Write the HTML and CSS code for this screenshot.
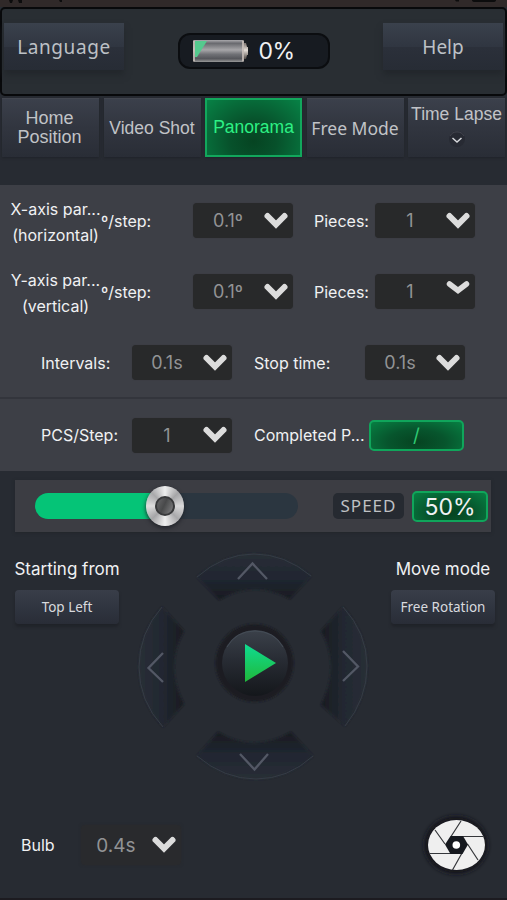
FILE: index.html
```html
<!DOCTYPE html>
<html lang="en">
<head>
<meta charset="utf-8">
<title>Panorama</title>
<link rel="stylesheet" href="styles.css">
</head>
<body>
<svg class="defs" width="0" height="0" aria-hidden="true">
  <symbol id="chev" viewBox="0 0 26 20"><path d="M4.5 5 13 13.5 21.500 5" fill="none" stroke="#dcdcdc" stroke-width="6" stroke-linecap="round"/></symbol>
</svg>
<main class="app">
  <div class="status"><svg width="507" height="8"><path d="M9 0h4l-1 3h-2zM18 0h4v3h-3zM59 0h3v2h-2zM455 0h4v1.500h-3zM472 0h24q0 2-3 2h-18q-3 0-3-2z" fill="#0c0c0d"/></svg></div>
  <header class="header">
    <button class="top-btn"><span class="t-language">Language</span></button>
    <div class="battery">
      <svg width="58" height="26" viewBox="0 0 58 26">
        <defs>
          <linearGradient id="cell" x1="0" y1="0" x2="0" y2="1"><stop offset="0" stop-color="#aaa9ad"/><stop offset=".15" stop-color="#68696e"/><stop offset=".45" stop-color="#a7a6a9"/><stop offset=".65" stop-color="#707176"/><stop offset=".85" stop-color="#55565b"/><stop offset="1" stop-color="#999"/></linearGradient>
          <linearGradient id="cap" x1="0" y1="0" x2="0" y2="1"><stop offset="0" stop-color="#78706c"/><stop offset=".45" stop-color="#e5ded8"/><stop offset="1" stop-color="#4d4744"/></linearGradient>
        </defs>
        <path d="M52 5h3l1 4h1v8h-1l-1 4h-3z" fill="url(#cap)"/>
        <rect x="2" y="2" width="51" height="22" rx="2" fill="url(#cell)"/>
        <path d="M4 3h12L6 19H4z" fill="#55c98e"/>
        <path d="M3 2.500v21M52 2.500v21" stroke="#d2c7c1" stroke-width="1.500"/>
      </svg>
      <span class="t-zero">0%</span>
    </div>
    <button class="top-btn"><span class="t-help">Help</span></button>
  </header>
  <nav class="tabs">
    <button class="tab"><span class="t-home">Home<br>Position</span></button>
    <button class="tab"><span class="t-video">Video Shot</span></button>
    <button class="tab active"><span class="t-pano">Panorama</span></button>
    <button class="tab"><span class="t-free">Free Mode</span></button>
    <button class="tab lapse"><span class="t-lapse">Time Lapse</span><svg width="18" height="18"><circle cx="9" cy="9" r="8" fill="#272a33"/><path d="M2 6a8 8 0 0 1 14 0" fill="none" stroke="#444650"/><path d="m4.500 8 4.500 4 4.500-4" fill="none" stroke="#d7d9dd" stroke-width="1.500"/></svg></button>
  </nav>
  <section class="panel">
    <div class="axis-row">
      <div class="axis"><span class="t-axis">X-axis par...</span><span class="t-dir">(horizontal)</span></div>
      <span class="label t-step">º/step:</span>
      <div class="select"><span>0.1º</span><svg class="chev"><use href="#chev"/></svg></div>
      <span class="label t-pieces">Pieces:</span>
      <div class="select"><span>1</span><svg class="chev"><use href="#chev"/></svg></div>
    </div>
    <div class="axis-row">
      <div class="axis"><span class="t-axis">Y-axis par...</span><span class="t-dir">(vertical)</span></div>
      <span class="label t-step">º/step:</span>
      <div class="select"><span>0.1º</span><svg class="chev"><use href="#chev"/></svg></div>
      <span class="label t-pieces">Pieces:</span>
      <div class="select"><span>1</span><svg class="chev raised" preserveAspectRatio="none" viewBox="0 0 26 20"><path d="M4.500 5 13 11.500 21.500 5" fill="none" stroke="#dcdcdc" stroke-width="5.500" stroke-linecap="round"/></svg></div>
    </div>
    <div class="time-row">
      <span class="label">Intervals:</span>
      <div class="select"><span>0.1s</span><svg class="chev"><use href="#chev"/></svg></div>
      <span class="label">Stop time:</span>
      <div class="select"><span>0.1s</span><svg class="chev"><use href="#chev"/></svg></div>
    </div>
    <div class="pcs-row">
      <span class="label">PCS/Step:</span>
      <div class="select"><span>1</span><svg class="chev"><use href="#chev"/></svg></div>
      <span class="label t-completed">Completed P...</span>
      <div class="green progress">/</div>
    </div>
  </section>
  <section class="speed">
    <div class="track"><div class="fill"></div><div class="knob"><div class="hub"></div></div></div>
    <span class="speed-label">SPEED</span>
    <span class="green percent">50%</span>
  </section>
  <section class="controls">
    <div class="side">
      <span class="t-start">Starting from</span>
      <button class="small-btn"><span class="t-topleft">Top Left</span></button>
    </div>
    <svg class="pad" width="250" height="240" viewBox="0 0 250 240">
      <defs>
        <linearGradient id="gt" x1="0" y1="0" x2="0" y2="1"><stop offset="0" stop-color="#292e37"/><stop offset=".55" stop-color="#202630"/><stop offset="1" stop-color="#181b21"/></linearGradient>
        <linearGradient id="gb" x1="0" y1="1" x2="0" y2="0"><stop offset="0" stop-color="#292e37"/><stop offset=".55" stop-color="#202630"/><stop offset="1" stop-color="#181b21"/></linearGradient>
        <linearGradient id="gl"><stop offset="0" stop-color="#292e37"/><stop offset=".5" stop-color="#222831"/><stop offset="1" stop-color="#181b21"/></linearGradient>
        <linearGradient id="gr" x1="1" x2="0"><stop offset="0" stop-color="#292e37"/><stop offset=".5" stop-color="#222831"/><stop offset="1" stop-color="#181b21"/></linearGradient>
        <linearGradient id="ball" x1="0" y1="0" x2="0" y2="1"><stop offset="0" stop-color="#3b414a"/><stop offset=".45" stop-color="#282c34"/><stop offset="1" stop-color="#14171b"/></linearGradient>
        <linearGradient id="play" x1="0" y1="0" x2="0" y2="1"><stop offset="0" stop-color="#0fdc91"/><stop offset="1" stop-color="#20b83a"/></linearGradient>
        <filter id="soft" x="-20%" y="-20%" width="140%" height="140%"><feGaussianBlur stdDeviation="1.200"/></filter>
      </defs>
      <g filter="url(#soft)">
        <path d="M67 32Q93 9 124 9T181 31L160 54Q124 34 89 55Z" fill="url(#gt)"/>
        <path d="M67 211Q94 234 126 234T183 211L161 187Q124 209 88 187Z" fill="url(#gb)"/>
        <path d="M32 62Q9 88 9 122T33 182L54 159Q34 121 54 86Z" fill="url(#gl)"/>
        <path d="M213 62Q237 88 237 121T215 181L191 160Q211 120 191 86Z" fill="url(#gr)"/>
      </g>
      <g fill="none" stroke="#38404a" stroke-width=".8">
        <path d="M67 32Q93 9 124 9T181 31M67 211Q94 234 126 234T183 211M32 62Q9 88 9 122T33 182M213 62Q237 88 237 121T215 181"/>
      </g>
      <g fill="none" stroke="#535865" stroke-width="2.300">
        <path d="m108 34 14.500-15.500L137 34M110 209l14.500 15.500L138 209M33 108 18.500 123 33 137M213 106l15 15.500L213 136"/>
      </g>
      <circle cx="124.500" cy="118" r="39" fill="#1b1e23" filter="url(#soft)"/>
      <circle cx="125" cy="118" r="33" fill="url(#ball)"/>
      <path d="M97 102Q106 86 125 86T153 102" fill="none" stroke="#48515a" stroke-width=".8"/>
      <path d="M115 99v38l31-19z" fill="url(#play)"/>
    </svg>
    <div class="side">
      <span class="t-move">Move mode</span>
      <button class="small-btn"><span class="t-rotation">Free Rotation</span></button>
    </div>
  </section>
  <footer class="footer">
    <span class="label t-bulb">Bulb</span>
    <div class="select bulb"><span>0.4s</span><svg class="chev"><use href="#chev"/></svg></div>
    <svg class="shutter" width="76" height="70" viewBox="0 0 76 70">
      <defs><filter id="halo" x="-20%" y="-20%" width="140%" height="140%"><feGaussianBlur stdDeviation="2"/></filter></defs>
      <ellipse cx="38" cy="35" rx="32" ry="29" fill="#15181c" filter="url(#halo)"/>
      <ellipse cx="38.500" cy="35" rx="28.500" ry="25" fill="#efefef"/>
      <path d="m33 26.500 10-15.500M44.500 26.500H65M49.500 34 60 50M44 43 34.500 60M33 43.500H12M27 34 17 20" stroke="#35373b" stroke-width="1.200"/>
      <path d="M32.500 26h12.500l5 8.500L44.500 44H32.500l-5.500-9.500z" fill="#15181e"/>
      <circle cx="38.300" cy="35" r="3.800" fill="#fff"/>
    </svg>
  </footer>
</main>
</body>
</html>
```
FILE: styles.css
```css
* { box-sizing: border-box; }
body { margin: 0; background: #272b32; color: #f0f1f3; font-family: Inter, "Liberation Sans", sans-serif; }
button { border: 0; padding: 0; color: inherit; font: inherit; }
span { white-space: nowrap; }
svg { display: block; flex: none; }
.defs { position: absolute; }
.app { width: 507px; height: 900px; overflow: hidden; border-bottom: 2px solid #1c1b20; }
.status { height: 7px; background: #302929; }
.header { height: 89px; padding: 14px 2px 0; display: flex; justify-content: space-between; align-items: flex-start; border: 2px solid #08090b; border-radius: 5px; background: #292e33; }
.top-btn { width: 120px; height: 47px; background: linear-gradient(#3a414c, #303641 50%, #2b303a 52%, #272c35); box-shadow: 0 5px 6px #23272c; font-family: "Noto Sans", sans-serif; color: #bdc1c6; font-size: 19px; line-height: 46px; }
.t-language { letter-spacing: .6px; }
.battery { margin-top: 10px; width: 152px; height: 36px; border: 2px solid #0b0d10; border-radius: 12px; background: #171b21; display: flex; align-items: center; padding-left: 11px; gap: 10px; font-size: 23px; }
.t-zero { letter-spacing: -.6px; }
.tabs { display: grid; grid-template-columns: 97px 97px 97px 97px 97px; column-gap: 4.500px; padding: 2px 2px 0; height: 62px; }
.tab { height: 59px; background: linear-gradient(#3b404b, #323640 45%, #292d36); color: #c1c3c7; font: 18px/19px "Liberation Sans", sans-serif; border-top: 1px solid #42464f; box-shadow: 0 1px 2px #202329; display: flex; align-items: center; justify-content: center; }
.tab.active { border: 2px solid #12a75c; background: radial-gradient(ellipse at 50% 75%, #064422 0, #07512b 35%, #078246 100%); color: #2df184; }
.t-home { position: relative; left: -1px; }
.t-video { font-size: 17.500px; }
.t-pano { font-size: 17.500px; }
.t-free { font-family: "Noto Sans", sans-serif; font-size: 17.500px; }
.tab.lapse { flex-direction: column; justify-content: flex-start; padding-top: 6px; gap: 6px; }
.t-lapse { font-size: 17.500px; }
.panel { margin-top: 27px; height: 286px; background: #3d3f46; }
.axis-row, .time-row, .pcs-row { display: grid; align-items: center; height: 71px; font-size: 16px; }
.axis-row { grid-template-columns: 90px 92px 121px 61px 100px; padding-left: 11px; }
.axis { display: flex; flex-direction: column; align-items: center; line-height: 26px; padding-top: 2px; width: 89px; }
.time-row { grid-template-columns: 91px 122px 111px 100px; padding-left: 41px; }
.pcs-row { grid-template-columns: 91px 122px 115px 95px; padding-left: 41px; margin-top: 1px; height: 72px; box-shadow: 0 -2px 0 #33353c; }
.select { width: 100px; height: 35px; background: #28292a; border-radius: 4px; color: #929395; font-size: 18px; display: flex; align-items: center; box-shadow: 0 0 1px #323337; }
.select span { width: 70px; text-align: center; }
.chev { width: 26px; height: 20px; }
.raised { margin-top: -6px; }
.green { border: 2px solid #10a55b; border-radius: 5px; background: radial-gradient(ellipse at 50% 75%, #064321, #07552d 45%, #078043); text-align: center; }
.progress { height: 31px; color: #2ec973; font-size: 19px; line-height: 28px; }
.speed { margin: 9px 16px 0 15px; height: 52px; background: #3c3d43; padding-left: 20px; display: flex; align-items: center; box-shadow: 0 1px 3px #22252a; }
.track { width: 263px; height: 26px; border-radius: 13px; background: #2b3640; display: flex; align-items: center; }
.fill { width: 130px; height: 26px; border-radius: 13px 0 0 13px; background: #05c477; }
.knob { margin-left: -19px; width: 38px; height: 40px; border-radius: 50%; background: conic-gradient(#eee, #a5a5a7, #d9d9da, #a9a9ab, #eee, #a5a5a7, #dedede, #a9a9ab, #eee); display: grid; place-items: center; box-shadow: 0 2px 4px #202329; }
.hub { width: 20px; height: 20px; border-radius: 50%; border: 2px solid #38393b; background: linear-gradient(115deg, #69696b, #48494a 45%, #828284); }
.speed-label { margin-left: 35px; width: 71px; height: 26px; border-radius: 5px; background: #262a31; color: #bfc1c4; font: 17px/26px "Noto Sans", sans-serif; letter-spacing: 1px; text-align: center; }
.percent { margin-left: 8px; width: 76px; height: 31px; font-size: 23px; line-height: 28px; }
.controls { display: grid; grid-template-columns: 104px 250px 104px; column-gap: 11px; padding: 13px 15px 0; height: 253px; }
.side { display: flex; flex-direction: column; align-items: center; padding-top: 14px; font-size: 17px; line-height: 20px; }
.small-btn { margin-top: 11px; width: 104px; height: 34px; border-radius: 4px; background: linear-gradient(#393e49, #303540 50%, #292d37); box-shadow: 0 3px 3px #202329; font: 13.500px/34px "Noto Sans", sans-serif; color: #d8dade; }
.footer { display: flex; align-items: center; height: 100px; padding: 20px 0 0 21px; }
.t-bulb { width: 59px; font-size: 16px; }
.bulb { height: 40px; background: #292a2d; box-shadow: 0 0 3px #292a2d; margin-left: 1px; }
.bulb { font-size: 19px; }
.shutter { margin-left: 237px; }
```
